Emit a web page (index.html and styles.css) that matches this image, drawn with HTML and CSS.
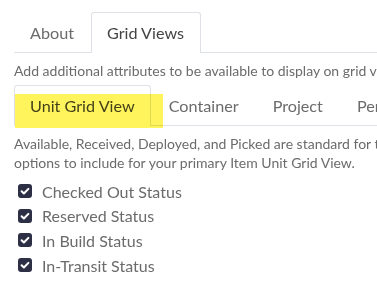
FILE: index.html
```html
<!DOCTYPE html>
<html lang="en">
<head>
    <meta charset="UTF-8">
    <title>Grid Views</title>
    <link rel="stylesheet" href="styles.css">
</head>
<body>
    <div class="page">
        <ul class="tabs">
            <li class="tab">About</li>
            <li class="tab active">Grid Views</li>
        </ul>

        <p class="desc">Add additional attributes to be available to display on grid views.</p>

        <div class="subtabs-wrap">
            <ul class="tabs subtabs">
                <li class="tab active">Unit Grid View</li>
                <li class="tab">Container</li>
                <li class="tab">Project</li>
                <li class="tab">Personnel</li>
            </ul>
            <span class="highlight"></span>
        </div>

        <p class="desc info">Available, Received, Deployed, and Picked are standard for the grid. Select the<br>options to include for your primary Item Unit Grid View.</p>

        <ul class="checks">
            <li><span class="box"><svg viewBox="0 0 14 14"><path d="M3.6 7.2l2.3 2.3 4.5-4.6" fill="none" stroke="#fff" stroke-width="2" stroke-linecap="round" stroke-linejoin="round"/></svg></span>Checked Out Status</li>
            <li><span class="box"><svg viewBox="0 0 14 14"><path d="M3.6 7.2l2.3 2.3 4.5-4.6" fill="none" stroke="#fff" stroke-width="2" stroke-linecap="round" stroke-linejoin="round"/></svg></span>Reserved Status</li>
            <li><span class="box"><svg viewBox="0 0 14 14"><path d="M3.6 7.2l2.3 2.3 4.5-4.6" fill="none" stroke="#fff" stroke-width="2" stroke-linecap="round" stroke-linejoin="round"/></svg></span>In Build Status</li>
            <li><span class="box"><svg viewBox="0 0 14 14"><path d="M3.6 7.2l2.3 2.3 4.5-4.6" fill="none" stroke="#fff" stroke-width="2" stroke-linecap="round" stroke-linejoin="round"/></svg></span>In-Transit Status</li>
        </ul>
    </div>
</body>
</html>
```

FILE: styles.css
```css
body {
    margin: 0;
    background: #fff;
    font-family: Lato, 'Open Sans', sans-serif;
    color: #6b6b6b;
    overflow: hidden;
}

.page {
    padding: 12px 0 0 14px;
    width: 363px;
    height: 272px;
    overflow: hidden;
}

.tabs {
    display: flex;
    list-style: none;
    margin: 0;
    padding: 0;
    border-bottom: 1px solid #dee2e6;
    white-space: nowrap;
}

.tab {
    padding: 0 16px 0 15px;
    height: 39px;
    line-height: 39px;
    font-size: 16.2px;
    color: #6b6b6b;
    border: 1px solid transparent;
    border-bottom: none;
    border-radius: 3px 3px 0 0;
    margin-bottom: -1px;
}

.tab.active {
    color: #444;
    background: #fff;
    border-color: #dee2e6;
    height: 40px;
}

.subtabs {
    gap: 2px;
}

.subtabs .tab {
    padding: 0 15px;
}

.desc {
    margin: 9px 0 0;
    font-size: 14px;
    line-height: 18px;
    white-space: nowrap;
}

.subtabs-wrap {
    position: relative;
    margin-top: 5px;
}

.highlight {
    position: absolute;
    left: 1px;
    top: 9px;
    width: 148px;
    height: 34px;
    background: #fff34a;
    mix-blend-mode: multiply;
    opacity: 0.9;
}

.info {
    margin-top: 8px;
    line-height: 19px;
}

.checks {
    list-style: none;
    margin: 7px 0 0;
    padding: 0 0 0 4px;
}

.checks li {
    display: flex;
    align-items: center;
    height: 24.6px;
    font-size: 16px;
    color: #6b6b6b;
}

.box {
    width: 14px;
    height: 14px;
    border-radius: 3px;
    background: #2d2f45;
    margin-right: 10px;
    display: flex;
}

.box svg {
    width: 14px;
    height: 14px;
}
```
